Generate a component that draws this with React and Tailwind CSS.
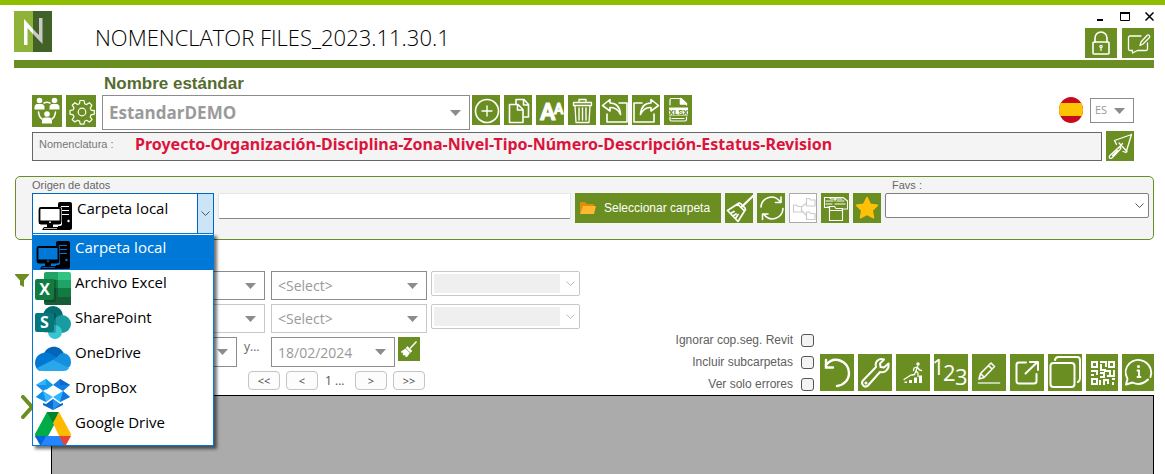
import { useState } from "react"

const SOURCES = [
  { name: "Carpeta local", Icon: PcIcon },
  { name: "Archivo Excel", Icon: ExcelIcon },
  { name: "SharePoint", Icon: SharePointIcon },
  { name: "OneDrive", Icon: OneDriveIcon },
  { name: "DropBox", Icon: DropBoxIcon },
  { name: "Google Drive", Icon: GoogleDriveIcon },
]

/* ---------- source icons (36 x 35) ---------- */

function PcIcon({ screen = "#fff" }) {
  return (
    <svg width="36" height="35" viewBox="0 0 36 35" aria-hidden="true">
      <rect x="21" y="6" width="14" height="28" rx="2" fill="#000" />
      <path d="M24 10.5h8M24 14.5h8M24 18.5h8" stroke={screen} strokeWidth="1" />
      <circle cx="31.500" cy="25" r="1.200" fill={screen} />
      <rect x="1" y="11" width="24" height="19" rx="2" fill={screen} />
      <rect x="2.500" y="12" width="21" height="15.500" rx="1.500" fill={screen} stroke="#000" strokeWidth="1.800" />
      <path d="M2 24.500h22v3.500h-22z" fill="#000" />
      <circle cx="13" cy="26.200" r=".9" fill={screen} />
      <path d="M10 28h6v3h5l2 3H5l2-3h3z" fill="#000" />
      <path d="M7 32.500h13" stroke={screen} strokeWidth=".7" />
    </svg>
  )
}

function ExcelIcon() {
  return (
    <svg width="36" height="35" viewBox="0 0 36 35" aria-hidden="true">
      <path d="M11 2h12v8H9V4q0-2 2-2z" fill="#21a366" />
      <path d="M23 2h11q2 0 2 2v6H23z" fill="#33c481" />
      <path d="M9 10h14v8H9z" fill="#107c41" />
      <path d="M23 10h13v8H23z" fill="#21a366" />
      <path d="M9 18h27v17H11q-2 0-2-2z" fill="#185c37" />
      <path d="M23 18h13v9H23z" fill="#107c41" />
      <path d="M9 9h10q2 0 2 2v19q0 2-2 2H9z" fill="#000" opacity=".2" />
      <rect x="0" y="9" width="19" height="21" rx="2" fill="#107c41" />
      <text x="9.500" y="25" textAnchor="middle" fontSize="16" fontWeight="700" fill="#fff" className="font-['Open_Sans',sans-serif]">X</text>
    </svg>
  )
}

function SharePointIcon() {
  return (
    <svg width="36" height="35" viewBox="0 0 36 35" aria-hidden="true">
      <circle cx="18" cy="11" r="10" fill="#036c70" />
      <circle cx="27" cy="19" r="9" fill="#1a9ba1" />
      <circle cx="20" cy="27" r="7" fill="#37c6d0" />
      <path d="M9 8h10q2 0 2 2v16q0 2-2 2H9z" fill="#000" opacity=".2" />
      <rect x="0" y="8" width="19" height="19" rx="2" fill="#03787c" />
      <text x="9.500" y="23" textAnchor="middle" fontSize="16" fontWeight="700" fill="#fff" className="font-['Open_Sans',sans-serif]">S</text>
    </svg>
  )
}

function OneDriveIcon() {
  return (
    <svg width="36" height="35" viewBox="0 0 36 35" aria-hidden="true">
      <path d="M9 14C12 5 25 4 29 14L23 22z" fill="#0364b8" />
      <path d="M8 13c4-1 7 0 9 1.500l9 5L5 31C-2 29-2 15 8 13z" fill="#0078d4" />
      <path d="M28 13c4 0 8 3.500 8 9 0 3-1 5-3 6L16 21l6-4c2-2 3-4 6-4z" fill="#1490df" />
      <path d="M18 20l16 8c-1 2-3 3-5 3H8c-3 0-5-1-6-3z" fill="#28a8ea" />
    </svg>
  )
}

function DropBoxIcon() {
  return (
    <svg width="36" height="35" viewBox="0 0 36 35" aria-hidden="true">
      <path d="M11 4l7 6-10 6-7-6z" fill="#1f8ce6" />
      <path d="M11 4l-10 6 10 0z" fill="#2fb4ff" />
      <path d="M11 4l7 6-7 5z" fill="#0aa0e8" />
      <path d="M25 4l10 6-7 6-10-6z" fill="#1080e0" />
      <path d="M25 4l10 6H25z" fill="#0d69cc" />
      <path d="M8 16l10 6-7 5-10-5z" fill="#3db8ff" />
      <path d="M8 16l3 11-10-5z" fill="#0d8ee8" />
      <path d="M28 16l7 6-10 5-7-5z" fill="#2fb4ff" />
      <path d="M28 16l7 6-10 5z" fill="#1177dc" />
      <path d="M8 28l3 1 7-5 7 5 3-1v2l-10 5-10-5z" fill="#0d69cc" />
      <path d="M18 24l7 5-7 6z" fill="#2196f3" />
    </svg>
  )
}

function GoogleDriveIcon() {
  return (
    <svg width="36" height="35" viewBox="0 0 36 35" aria-hidden="true">
      <path d="M12 2L0 24q0 3 1 4h11l12-22z" fill="#00ac47" />
      <path d="M12 2h12l-6 11z" fill="#00832d" />
      <path d="M24 2l12 22-1 4H25L18 13z" fill="#ffba00" />
      <path d="M0 26h12l-5 9H5z" fill="#0066da" />
      <path d="M11 26h14l5 9H6z" fill="#2684fc" />
      <path d="M24 26h12l-5 9h-2z" fill="#ea4335" />
    </svg>
  )
}

/* ---------- generic pieces ---------- */

const line = { fill: "none", stroke: "#fff", strokeWidth: 1.6, strokeLinecap: "round", strokeLinejoin: "round" }

function Tile({ label, className, children, box }) {
  return (
    <button type="button" aria-label={label} className={`shrink-0 bg-[#6b8e23] ${className}`}>
      <svg viewBox={box} className="block h-full w-full" {...line}>{children}</svg>
    </button>
  )
}

const Small = (props) => <Tile className="h-[30px] w-7" box="0 0 28 30" {...props} />
const Medium = (props) => <Tile className="h-8 w-[30px]" box="0 0 30 32" {...props} />
const Large = (props) => <Tile className="h-[37px] w-[34px]" box="0 0 34 37" {...props} />

function Dropdown({ label, value, className, textClass }) {
  return (
    <div className={`relative shrink-0 border bg-white ${className}`}>
      <select aria-label={label} className={`block h-full w-full appearance-none bg-transparent ${textClass}`}>
        <option>{value}</option>
      </select>
      <svg width="11" height="6" className="pointer-events-none absolute top-1/2 right-2 -mt-[3px]">
        <path d="M0 0h11l-5.500 6z" fill="#8c8c8c" />
      </svg>
    </div>
  )
}

function ChevronSelect({ label, className, children, stroke = "#555" }) {
  return (
    <div className={`relative shrink-0 rounded-[2px] border bg-white ${className}`}>
      <select aria-label={label} className="absolute inset-0 h-full w-full appearance-none bg-transparent" />
      {children}
      <svg width="9" height="5" className="pointer-events-none absolute top-1/2 right-1 -mt-[3px]" fill="none" stroke={stroke}>
        <path d="M.5 .5l4 4 4-4" />
      </svg>
    </div>
  )
}

function PageButton({ children, label }) {
  return (
    <button type="button" aria-label={label} className="h-[19px] w-8 rounded-[4px] border border-[#c4c4c4] bg-[#fcfcfc] text-[11px] leading-4 text-[#444]">
      {children}
    </button>
  )
}

function Check({ id, children }) {
  return (
    <div className="flex h-[14px] items-center justify-end gap-2">
      <label htmlFor={id} className="text-[12px] leading-[14px] text-[#606060]">{children}</label>
      <input id={id} type="checkbox" className="h-[13px] w-[13px] appearance-none rounded-[3px] border border-[#555] bg-[#f3f3f3] checked:bg-[#6b8e23]" />
    </div>
  )
}

/* ---------- sections ---------- */

function Header() {
  return (
    <header className="mr-[11px] ml-[14px] flex h-[63px] border-b-8 border-[#6b8e23]">
      <svg width="38" height="41" viewBox="0 0 38 41" className="mt-[6px]" role="img" aria-label="Nomenclator">
        <path d="M0 0h19v41H0z" fill="#8fb339" />
        <path d="M19 0h19v41H19z" fill="#426126" />
        <path d="M10 8l9 10v5l-5.500-6v17H10z" fill="#fff" />
        <path d="M19 18l6 6V7h3.500v26L19 23z" fill="#c9c9c9" />
      </svg>
      <h1 className="mt-4 ml-[43px] font-['Open_Sans',sans-serif] text-[22px] leading-8 font-light text-black">
        NOMENCLATOR FILES_2023.11.30.1
      </h1>
      <div className="ml-auto flex flex-col items-end">
        <div className="flex h-[23px] items-center gap-[15px]">
          <button type="button" aria-label="Minimizar">
            <svg width="9" height="9"><path d="M1 7h6v2H1z" /></svg>
          </button>
          <button type="button" aria-label="Maximizar">
            <svg width="10" height="9"><path d="M.5 1h9v7.500h-9z" fill="none" stroke="#000" /><path d="M0 0h10v2H0z" /></svg>
          </button>
          <button type="button" aria-label="Cerrar">
            <svg width="9" height="9" stroke="#000" strokeWidth="1.500"><path d="M.5 .5l8 8M8.500 .5l-8 8" /></svg>
          </button>
        </div>
        <div className="flex gap-[5px]">
          <Tile label="Bloquear" className="h-[30px] w-8" box="0 0 32 30">
            <rect x="8" y="14" width="16" height="12" rx="1" />
            <path d="M10 14V10a6 6 0 0 1 12 0v4" />
            <circle cx="16" cy="18.500" r="1.200" strokeWidth="1.200" />
            <path d="M16 20v2.500" strokeWidth="1.200" />
          </Tile>
          <Tile label="Comentarios" className="h-[30px] w-8" box="0 0 32 30">
            <path d="M19 8H8a1.500 1.500 0 0 0-1.500 1.500V21A1.500 1.500 0 0 0 8 22.500h2.500V25l5-2.500H24a1.500 1.500 0 0 0 1.500-1.500v-6" strokeWidth="1.300" />
            <path d="M18 17.500l1-3.500 6-6.500c1.500-1.500 3.500 .5 2.500 2L21 16z" strokeWidth="1.300" />
          </Tile>
        </div>
      </div>
    </header>
  )
}

function StandardBar() {
  return (
    <section className="mr-[31px] ml-8">
      <h2 className="pt-[5px] pl-[72px] font-['Liberation_Sans',sans-serif] text-[17px] leading-[22px] font-bold text-[#556b2f]">
        Nombre estándar
      </h2>
      <div className="flex items-start gap-1">
        <Medium label="Equipo">
          <g fill="#fff" stroke="none">
            <circle cx="7.500" cy="5.500" r="2.800" /><path d="M2.500 14.500v-2q0-3.500 3-3.500h4q3 0 3 3.500v2z" />
            <circle cx="22.500" cy="5.500" r="2.800" /><path d="M17.500 14.500v-2q0-3.500 3-3.500h4q3 0 3 3.500v2z" />
            <circle cx="15" cy="19" r="2.800" /><path d="M10 28.500v-2q0-4 3-4h4q3 0 3 4v2z" />
          </g>
          <path d="M12 8q3-1.500 6 0M6.500 17q.5 5 3.500 7M23.500 17q-.5 5-3.500 7" />
        </Medium>
        <Medium label="Configuración">
          <g strokeWidth="1.200">
            <circle cx="16" cy="17" r="3.800" />
            <path d="M14 5.500h4l.6 3.200 2 .9 2.800-1.900 2.500 2.700-1.700 2.700.9 2 3.200.5v3.600l-3.200.6-.9 2.100 1.800 2.600-2.600 2.600-2.700-1.800-2.100.9-.6 3h-3.800l-.6-3.100-2.100-.9-2.600 1.800L6.200 24.500 8 21.800l-.9-2-3.100-.6v-3.700l3.200-.6.8-2-1.800-2.700 2.700-2.500 2.600 1.800 2-.8z" />
          </g>
        </Medium>
        <Dropdown label="Nombre estándar" value="EstandarDEMO" className="ml-[2px] -mr-[2px] h-[35px] w-[368px] border-[#8c8c8c]" textClass="pl-[6px] font-['Open_Sans',sans-serif] text-[17px] font-bold text-[#9a9a9a]" />
        <Small label="Añadir">
          <circle cx="15" cy="16" r="11.500" /><path d="M15 11v10M10 16h10" strokeWidth="1.400" />
        </Small>
        <Small label="Duplicar">
          <path d="M12 9V4.500h8l4.500 5V22H20M19.500 5v5h5" />
          <path d="M5.500 9.500H14l5 5V27.500H5.500zM13.500 10v5h5" />
        </Small>
        <Small label="Mayúsculas">
          <text y="25" fill="#fff" strokeWidth=".8" fontWeight="700" className="font-['Roboto',sans-serif]">
            <tspan x="4" fontSize="23">A</tspan>
            <tspan x="18" y="19" fontSize="14">A</tspan>
          </text>
        </Small>
        <Small label="Eliminar">
          <path d="M7 11l1 16.500h13L22 11M5.500 7.500h18v3h-18zM11 7V4.500h7V7" strokeWidth="1.300" />
          <path d="M11 13v12M14.500 13v12M18 13v12" strokeWidth="1.400" />
        </Small>
        <Small label="Importar">
          <path d="M7 19v8h20V8h-8" />
          <path d="M10 4.500L2.500 10.500 10 16v-3.500c5-.5 8 1.500 10.500 7C20 12 16.500 8 10 8z" />
        </Small>
        <Small label="Exportar">
          <path d="M10 8H2v19h20v-8" />
          <path d="M19 4.500l7.500 6-7.500 5.500v-3.500c-5-.5-8 1.500-10.500 7C9 12 12.500 8 19 8z" />
        </Small>
        <Small label="Exportar a XLSX">
          <path d="M6 10V5q0-1.500 1.500-1.500H17l5.500 5V10M6 22v2.500q0 1.500 1.500 1.500H21q1.500 0 1.500-1.500V22M8 23.500h12" strokeWidth="1.200" />
          <path d="M16.500 3.500v5.500h6z" fill="#fff" />
          <path d="M5 12.500h19v8H5z" fill="#fff" stroke="none" />
          <text x="14.500" y="19.500" textAnchor="middle" fontSize="8" fontWeight="700" fill="#6b8e23" stroke="none" className="font-['Roboto',sans-serif]">XLSX</text>
        </Small>
        <div className="mt-[2px] ml-auto flex items-start gap-[7px]">
          <svg width="24" height="26" viewBox="0 0 24 26" role="img" aria-label="España">
            <clipPath id="flag"><ellipse cx="12" cy="13" rx="12" ry="13" /></clipPath>
            <g clipPath="url(#flag)">
              <path d="M0 0h24v26H0z" fill="#c60b1e" />
              <path d="M0 6h24v13H0z" fill="#ffc400" />
            </g>
          </svg>
          <Dropdown label="Idioma" value="ES" className="mt-[1px] h-[25px] w-[44px] border-[#8c8c8c]" textClass="pl-1 font-['Open_Sans',sans-serif] text-[11px] text-[#999]" />
        </div>
      </div>
      <div className="mt-[1px] flex items-center gap-1">
        <div className="flex h-[29px] flex-1 items-center border border-[#666] bg-[#f4f4f4] pb-[4px]">
          <span className="w-[102px] pl-[6px] font-['Liberation_Sans',sans-serif] text-[11px] text-[#777]">Nomenclatura :</span>
          <span className="font-['Noto_Sans',sans-serif] text-[16px] leading-5 font-bold text-[#dc143c]">
            Proyecto-Organización-Disciplina-Zona-Nivel-Tipo-Número-Descripción-Estatus-Revision
          </span>
        </div>
        <Small label="Construir">
          <g strokeWidth="1.300">
            <path d="M25.500 3.500L8.500 9.500l2 4M13 12l8 8.500M25.500 3.500L20 21.500l-3-1" />
            <path d="M16.500 12.500l-4 4.500M12 17l-8 7.500c-2 2 .5 4 2.500 2l7.500-8c2-2 0-3.500-2-1.500zM11.500 19.500l-5 5" />
          </g>
        </Small>
      </div>
    </section>
  )
}

function SourcePicker() {
  const [open, setOpen] = useState(true)
  const [current, setCurrent] = useState(0)
  const CurrentIcon = SOURCES[current].Icon
  return (
    <div className="relative w-[182px] shrink-0 font-['Open_Sans',sans-serif] text-[15px] text-black">
      <button
        type="button"
        id="source"
        aria-haspopup="listbox"
        aria-expanded={open}
        onClick={() => setOpen(!open)}
        className="flex h-[41px] w-full items-start border border-[#0067c0] bg-white"
      >
        <span className="mt-[2px] ml-1"><CurrentIcon /></span>
        <span className="mt-1 ml-1 leading-5">{SOURCES[current].name}</span>
        <span className="ml-auto flex h-full w-4 items-center justify-center border-l border-[#0067c0] bg-[#cce4f7]">
          <svg width="9" height="5" fill="none" stroke="#555"><path d="M.5 .5l4 4 4-4" /></svg>
        </span>
      </button>
      {open && (
        <ul role="listbox" aria-label="Origen de datos" className="absolute top-10 left-0 z-10 w-full border border-[#0078d7] bg-white pt-[1px] shadow-[3px_3px_3px_rgba(0,0,0,0.55)]">
          {SOURCES.map(({ name, Icon }, i) => (
            <li
              key={name}
              role="option"
              aria-selected={i === current}
              onClick={() => { setCurrent(i); setOpen(false) }}
              className={`flex h-[35px] items-start gap-1 pl-[2px] ${i === current ? "bg-[#0078d7] text-white" : ""}`}
            >
              <Icon screen={i === current ? "#0078d7" : "#fff"} />
              <span className="mt-[2px] leading-5">{name}</span>
            </li>
          ))}
        </ul>
      )}
    </div>
  )
}

function SourcePanel() {
  return (
    <section className="mt-[15px] mr-[11px] ml-[15px] h-16 rounded-[5px] border border-[#6b8e23] bg-[#f4f4f4] pt-[1px] pr-1 pl-4">
      <div className="flex h-[15px] justify-between font-['Liberation_Sans',sans-serif] text-[11px] leading-[15px] text-[#666]">
        <label htmlFor="source">Origen de datos</label>
        <span className="w-[257px]">Favs :</span>
      </div>
      <div className="flex items-start gap-1">
        <SourcePicker />
        <input aria-label="Ruta" className="h-[26px] min-w-0 flex-1 rounded-[2px] border border-[#e5e5e5] border-b-[#888] bg-white px-2 text-[13px]" />
        <button type="button" className="flex h-[30px] w-[146px] shrink-0 items-center gap-2 bg-[#6b8e23] pl-[5px] font-['Liberation_Sans',sans-serif] text-[12px] text-white">
          <svg width="16" height="13" viewBox="0 0 16 13" aria-hidden="true">
            <path d="M0 1q0-1 1-1h4l2 2h6q1 0 1 1v2H0z" fill="#e08e0b" />
            <path d="M0 12V2h3v2z" fill="#e08e0b" />
            <path d="M3 4h13l-2 8H0z" fill="#ffb82e" />
          </svg>
          Seleccionar carpeta
        </button>
        <Small label="Limpiar ruta">
          <path d="M28 3L17 13.500" strokeWidth="2.200" />
          <path d="M12.500 11l7 7M12.500 11q1.500-1.500 3-.5l4.500 4.500q1 1.500-.5 3M12.500 11L2.500 17.500 13 28.500 19.500 18M5.500 20.500l3.500-2M8 23l3-2M10.500 25.500l2.500-4" strokeWidth="1.700" />
        </Small>
        <Small label="Actualizar">
          <path d="M4 14C4.500 5 16 0 23 8.500M24 4v5.500h-5.500M26 15.500C25.500 25 13.500 30 7 21.500M5.500 26.500V21H11" />
        </Small>
        <button type="button" aria-label="Estructura" className="h-[30px] w-7 shrink-0 border border-[#aaa] bg-white">
          <svg viewBox="0 0 26 28" className="block h-full w-full" fill="none" stroke="#ccc" strokeWidth="1.200">
            <path d="M3.500 11h3l1 1.500h4V18h-8zM16.500 4.500h3l1 1.500h4.500v6h-8.500zM16.500 18h3l1 1.500h4.500v6h-8.500zM11.500 13L16 9.500M11.500 16.500l4.500 4.500" />
          </svg>
        </button>
        <Small label="Copiar archivos">
          <g strokeWidth="1.100">
            <path d="M3.500 14.500v-10h5l1.500 1.500h6M8.500 4.500H14l1 1.500h6M14 8V4.500h8l4.500 3.500v8h-4M3.500 14.500h5M5 8h7M5 11h6M16 8h7M14 11h10M8.500 19v-5H6" />
            <path d="M8.500 27.500v-14h5l1.500 2h6.500v12z" />
            <path d="M8.500 17.500h13" />
          </g>
        </Small>
        <Small label="Añadir a favoritos">
          <path d="M14 4.500l3.200 6.700 7.300 1-5.300 5.100 1.300 7.400L14 21.200l-6.500 3.500 1.300-7.400-5.300-5.100 7.300-1z" fill="#ffc107" stroke="#ffc107" />
        </Small>
        <ChevronSelect label="Favs" className="h-[25px] w-[264px] border-[#808080]" />
      </div>
    </section>
  )
}

const selectText = "pl-[6px] font-['Open_Sans',sans-serif] text-[14px] font-normal text-[#999]"

function Filters() {
  return (
    <section className="mr-[11px] ml-[15px] flex pt-[31px] pb-1">
      <svg width="14" height="13" viewBox="0 0 14 13" className="mt-[3px]" aria-hidden="true">
        <path d="M0 0h14v1L9 6.500V13L5 11V6.500L0 1z" fill="#6b8e23" />
      </svg>
      <div className="ml-20 flex flex-col gap-1">
        <div className="flex items-start">
          <Dropdown label="Campo 1" value="" className="h-[29px] w-[156px] border-[#8c8c8c]" textClass={selectText} />
          <Dropdown label="Valor 1" value="<Select>" className="ml-[6px] h-[29px] w-[156px] border-[#8c8c8c]" textClass={selectText} />
          <ChevronSelect label="Filtro 1" className="ml-1 h-[25px] w-[149px] border-[#c8c8c8]" stroke="#bbb">
            <div className="pointer-events-none mt-[2px] mr-[19px] ml-[2px] h-[19px] bg-[#efefef]" />
          </ChevronSelect>
        </div>
        <div className="flex items-start">
          <Dropdown label="Campo 2" value="" className="h-[29px] w-[156px] border-[#c8c8c8]" textClass={selectText} />
          <Dropdown label="Valor 2" value="<Select>" className="ml-[6px] h-[29px] w-[156px] border-[#c8c8c8]" textClass={selectText} />
          <ChevronSelect label="Filtro 2" className="ml-1 h-[25px] w-[149px] border-[#c8c8c8]" stroke="#bbb">
            <div className="pointer-events-none mt-[2px] mr-[19px] ml-[2px] h-[19px] bg-[#efefef]" />
          </ChevronSelect>
        </div>
        <div className="flex items-start">
          <Dropdown label="Fecha inicial" value="" className="h-[30px] w-[128px] border-[#8c8c8c]" textClass={selectText} />
          <span className="w-[34px] pl-[7px] font-['Open_Sans',sans-serif] text-[12px] leading-5 text-[#666]">y...</span>
          <Dropdown label="Fecha final" value="18/02/2024" className="h-[30px] w-[124px] border-[#8c8c8c]" textClass={selectText} />
          <button type="button" aria-label="Limpiar filtros" className="ml-[3px] h-6 w-[22px] bg-[#6b8e23]">
            <svg viewBox="0 0 22 24" className="block h-full w-full" fill="#fff" stroke="#fff">
              <path d="M18.500 4.500L12 11.500" strokeWidth="1.400" />
              <path d="M9.500 9.500l4.500 4.500-1.500 1.500-4.500-4.500z" strokeWidth=".6" />
              <path d="M7.500 11.500l4.500 4.500-3 4-2-.5.500-1.500-2 .5-1-1.500 1-1.500-2 .5-.5-1.500z" stroke="none" />
            </svg>
          </button>
        </div>
        <div className="ml-[139px] flex items-center gap-[6px] pb-[1px] font-['Open_Sans',sans-serif]">
          <PageButton label="Primera página">&lt;&lt;</PageButton>
          <PageButton label="Página anterior">&lt;</PageButton>
          <span className="w-[25px] pl-[1px] text-[12px] leading-[19px] whitespace-nowrap text-[#555]">1 ...</span>
          <PageButton label="Página siguiente">&gt;</PageButton>
          <PageButton label="Última página">&gt;&gt;</PageButton>
        </div>
      </div>
      <div className="ml-auto flex items-end gap-[6px]">
        <div className="flex flex-col gap-2 font-['Liberation_Sans',sans-serif]">
          <Check id="revit">Ignorar cop.seg. Revit</Check>
          <Check id="sub">Incluir subcarpetas</Check>
          <Check id="errors">Ver solo errores</Check>
        </div>
        <div className="flex gap-1">
          <Large label="Deshacer">
            <path d="M6 11C14 1 29 7 29 19c0 7-5 12-12 13" strokeWidth="2.400" />
            <path d="M6 6v7.500h7" strokeWidth="2.400" strokeLinejoin="miter" />
          </Large>
          <Large label="Herramientas">
            <path d="M30.500 9.500l-4.500 4-3.500-.5-.5-3.500 4-4c-5-2-9.500 2-8 7.500L5 26.500c-3 3.500 2 8 5 5l12-13.500c5 1.500 9.500-3 8.500-8.500z" strokeWidth="2" />
            <circle cx="8" cy="29" r=".8" />
          </Large>
          <Large label="Progreso">
            <g stroke="none" fill="#fff">
              <circle cx="22" cy="10" r="1.700" />
              <path d="M8.500 27.500h2.500V29H8.500zM13 26h3v3h-3zM18 23.500h3V29h-3zM23 21.500h3V29h-3z" />
            </g>
            <path d="M21.500 12.500l-1.500 4.500 2 2v3.500M20 17l-1.500 3.500-2.500.5M21 13l-3 1-.5 2.500M22 14l1.500 2 2 .5M8 25.500l7-4.500" strokeWidth="1.300" />
          </Large>
          <Large label="Numerar">
            <text x="-2 9 21" y="21 27 31" fontSize="22" fill="#fff" stroke="none" className="font-['Open_Sans',sans-serif]">123</text>
          </Large>
          <Large label="Editar">
            <path d="M6.500 29h21" strokeWidth="1.600" stroke="#e3e8d5" />
            <path d="M7 25l1.500-5.500L19 9l3.500 3.500L12 23.500zM16.500 11.500l3.500 3.500M9 20l3 3" strokeWidth="1.600" />
          </Large>
          <Large label="Abrir">
            <path d="M16 8.500H9Q6.500 8.500 6.500 11v16q0 2.500 2.500 2.500h15q2.500 0 2.500-2.500v-7" strokeWidth="2" />
            <path d="M15.500 19.500L27.500 8M20 8h8v8" strokeWidth="2" />
          </Large>
          <Large label="Ventanas">
            <rect x="2.500" y="9" width="24" height="24" rx="3" strokeWidth="2" />
            <path d="M7 6q.5-3 3.500-3H29q3 0 3 3v18q0 3-2 4" strokeWidth="2" />
          </Large>
          <Tile label="Código QR" className="h-[37px] w-8" box="0 0 32 37">
            <g strokeWidth="2" strokeLinecap="butt" strokeLinejoin="miter">
              <path d="M6 8h5v5H6zM23 8h5v5h-5zM6 25h5v5H6z" />
              <path d="M14 8h6v5M15 10v6h5M5 17h6v4M5 21h3M14 19h4v4h-4M18 17h6v4M28 16v6h-7M14 26v5M18 31v-5h5M22 25v5M26 25h3M27 28v3" />
            </g>
          </Tile>
          <Tile label="Información" className="h-[37px] w-8" box="0 0 32 37">
            <path d="M5.500 25C-1 13 11 2 22.500 7.500c6 3.500 8 10 6 15.500M26 25.500C21.500 30 16 31 10.500 28.500L4 30.500 5.500 25" strokeWidth="1.900" />
            <path d="M15.500 16.500H17V23M15.500 23h3" strokeWidth="1.900" />
            <circle cx="16.500" cy="12.500" r="1.500" fill="#fff" stroke="none" />
          </Tile>
        </div>
      </div>
    </section>
  )
}

export default function App() {
  return (
    <div className="flex min-h-screen flex-col overflow-hidden bg-white">
      <div className="h-[5px] bg-[#8fbe00]" />
      <Header />
      <main className="flex flex-1 flex-col">
        <StandardBar />
        <SourcePanel />
        <Filters />
        <div className="mr-[11px] ml-[15px] flex flex-1 items-start">
          <button type="button" aria-label="Mostrar panel" className="w-9 pl-[6px]">
            <svg width="14" height="24" fill="none" stroke="#6b8e23" strokeWidth="4" strokeLinecap="round">
              <path d="M2 2l9 10-9 10" />
            </svg>
          </button>
          <div className="flex-1 self-stretch border border-b-0 border-black bg-[#ababab]" />
        </div>
      </main>
    </div>
  )
}
